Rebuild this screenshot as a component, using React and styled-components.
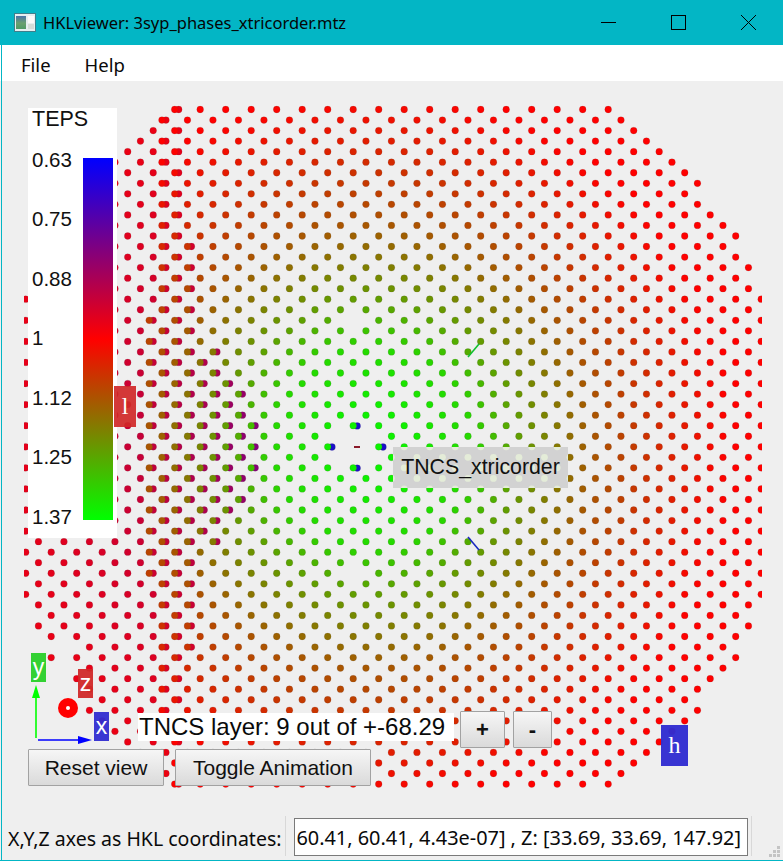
import React from 'react';
import styled, { createGlobalStyle } from 'styled-components';

const GlobalStyle = createGlobalStyle`
  html, body { margin: 0; padding: 0; background: #efefef; }
`

const UI_FONT = `"Noto Sans", "Open Sans", sans-serif`
const CHART_FONT = `"Liberation Sans", Arial, sans-serif`
const TEAL = '#03b6c5'

// lattice of the hkl plane, in page pixels
const CX = 353.2
const CY = 447
const DX = 25.5
const DY = 10.54

const RIGHT_EDGE = [608,620,633,646,659,671,684,697,684,697,710,722,735,722,735,748,735,748,760,748,760,748,760,748,760,
  748,760,748,760,748,760,748,760,748,760,748,760,748,760,748,760,748,760,748,760,748,760,
  748,735,748,735,722,735,722,710,697,684,697,684,671,658,646,633,620,608]

const BACK_LEFT = {32:178,31:165,30:152,29:140,28:127,27:114,26:102,25:89,24:102,23:89,22:76,21:64,20:51,19:64,18:51,17:38,16:51,15:38}
const GAPS = ['32:353','31:340','31:366','33:340','33:366','20:353','44:353']

const ramp = [[0,.04],[40,.06],[100,.15],[140,.35],[180,.5],[225,.67],[280,.82],[340,.97],[360,1]]
function frontT(r){
  for(let i=1;i<ramp.length;i++){
    if(r<=ramp[i][0]){
      const [a,ta]=ramp[i-1], [b,tb]=ramp[i]
      return ta+(tb-ta)*(r-a)/(b-a)
    }
  }
  return 1
}
function frontColor(x,y){
  const t=frontT(Math.hypot(x-372,y-CY))
  return `rgb(${Math.round(255*t)},${Math.round(255*(1-t))},0)`
}
function backColor(x,y){
  const s=.95*Math.exp(-Math.hypot(x-357,y-CY)/150)
  return `rgb(${Math.round(255*(1-s))},0,${Math.round(255*s)})`
}
function backRight(d){
  if(d<=2) return 256
  if(d<=5) return 243
  if(d<=6) return 230
  if(d<=9) return 217
  if(d<=14) return 204
  if(d<=19) return 192
  return 179
}

function buildDots(){
  const front=[], back=[]
  for(let n=0;n<=64;n++){
    const y=109.5+n*DY
    const odd=n%2===1
    const d=Math.abs(n-32)
    const frontLeft=odd?161:(d<=12?149:174)
    const backLeft=BACK_LEFT[d]??(odd?38:25)
    for(let i=-14;i<=17;i++){
      const x=CX+i*DX+(odd?DX/2:0)
      if(x>=frontLeft&&x<=RIGHT_EDGE[n]+3&&!GAPS.includes(`${n}:${Math.round(x)}`)){
        front.push({x,y,c:frontColor(x,y)})
      }
      const bx=x+4
      if(bx>=backLeft&&bx<=backRight(d)){
        back.push({x:bx,y,c:backColor(bx,y)})
      }
    }
  }
  const cy=CY
  const core=[[357.2,cy-2*DY],[357.2,cy+2*DY],[332,cy],[383,cy]]
  core.forEach(([x,y])=>back.push({x,y,c:'#1a10c8'}))
  return {front,back}
}
const {front,back}=buildDots()

const TNCS_BOX={x:393,y:447,w:175,h:41}
const boxDots=front.filter(p=>p.x>TNCS_BOX.x-4&&p.x<TNCS_BOX.x+TNCS_BOX.w+4&&p.y>TNCS_BOX.y-4&&p.y<TNCS_BOX.y+TNCS_BOX.h+4)

const Window = styled.div`
  position:relative;
  width:783px;
  height:861px;
  display:flex;
  flex-direction:column;
  overflow:hidden;
  background:#efefef;
  &::before{
    content:'';
    position:absolute;
    left:1px;
    top:45px;
    bottom:0;
    width:1px;
    background:${TEAL};
    z-index:5;
  }
  &::after{
    content:'';
    position:absolute;
    left:0;
    right:0;
    bottom:0;
    height:1px;
    background:${TEAL};
    z-index:5;
  }
`

const TitleBar = styled.div`
  height:45px;
  flex:none;
  display:flex;
  align-items:center;
  background:${TEAL};
  padding-left:14px;
  font:16.5px ${UI_FONT};
  color:#050505;
`

const TitleText = styled.span`
  margin-left:7px;
  flex:1;
  white-space:nowrap;
`

const WinButton = styled.div`
  width:70px;
  height:45px;
  display:flex;
  align-items:center;
  justify-content:center;
`

const MenuBar = styled.div`
  height:36px;
  box-sizing:border-box;
  padding:3px 0 0 21px;
  flex:none;
  display:flex;
  align-items:center;
  gap:34px;
  background:#fff;
  font:18.5px ${UI_FONT};
  color:#0a0a0a;
`

const Viewer = styled.div`
  position:relative;
  height:731px;
  flex:none;
`

const Lattice = styled.svg`
  display:block;
  width:783px;
  height:731px;
`

const Legend = styled.div`
  position:absolute;
  left:28px;
  top:27px;
  width:85px;
  height:430px;
  padding-left:4px;
  background:#fff;
  font:20.5px ${CHART_FONT};
  color:#111;
`

const LegendTitle = styled.div`
  height:23px;
  line-height:23px;
  font-size:21.5px;
`

const LegendBody = styled.div`
  display:flex;
  margin-top:16.5px;
`

const LegendLabels = styled.div`
  width:51px;
  height:380px;
  display:flex;
  flex-direction:column;
  justify-content:space-between;
  line-height:23px;
`

const ColorBar = styled.div`
  width:30px;
  height:362px;
  margin-top:10.5px;
  background:linear-gradient(to bottom,#0000ff,#ff0000 50%,#00ff00);
`

const AxisTag = styled.div`
  position:absolute;
  left:${p=>p.$x}px;
  top:${p=>p.$y-81}px;
  width:${p=>p.$w}px;
  height:${p=>p.$h}px;
  display:flex;
  align-items:center;
  justify-content:center;
  background:${p=>p.$bg};
  color:#fff;
  font:${p=>p.$serif?`24px "Liberation Serif", serif`:`23px ${CHART_FONT}`};
`

const SheetLabel = styled.div`
  position:absolute;
  left:${TNCS_BOX.x}px;
  top:${TNCS_BOX.y-81}px;
  width:${TNCS_BOX.w}px;
  height:${TNCS_BOX.h}px;
  display:flex;
  align-items:center;
  justify-content:center;
  overflow:hidden;
  background:#d2d2d2;
  font:21.3px ${CHART_FONT};
  color:#111;
`

const SheetDots = styled.svg`
  position:absolute;
  left:0;
  top:0;
  width:100%;
  height:100%;
`

const SheetText = styled.span`
  position:relative;
`

const Gizmo = styled.svg`
  position:absolute;
  left:28px;
  top:${680-81}px;
  width:70px;
  height:65px;
`

const LayerRow = styled.div`
  position:absolute;
  left:138px;
  top:${711-81}px;
  display:flex;
  align-items:center;
`

const LayerText = styled.div`
  width:316px;
  height:28px;
  margin-top:-5px;
  margin-right:6px;
  padding-left:1px;
  box-sizing:border-box;
  background:#fff;
  font:24px/28px ${CHART_FONT};
  color:#0a0a0a;
  white-space:nowrap;
`

const Button = styled.button`
  box-sizing:border-box;
  width:${p=>p.$w}px;
  height:37px;
  margin:0;
  padding:0;
  border:1px solid #a2a2a2;
  border-radius:1px;
  background:linear-gradient(to bottom,#f6f6f6,#dadada);
  color:#111;
  font:${p=>p.$bold?'bold 22px':'21px'} ${CHART_FONT};
  white-space:nowrap;
`

const StepButton = styled(Button)`
  margin-right:8px;
`

const ActionRow = styled.div`
  position:absolute;
  left:28px;
  top:${749-81}px;
  display:flex;
  gap:11px;
`

const StatusBar = styled.div`
  height:48px;
  flex:none;
  display:flex;
  align-items:center;
  padding-left:8px;
  font:19.5px ${UI_FONT};
  color:#0a0a0a;
`

const StatusLabel = styled.div`
  width:277px;
  padding-top:4px;
  white-space:nowrap;
`

const Divider = styled.div`
  width:1px;
  height:40px;
  background:#d8d8d8;
`

const CoordBox = styled.div`
  box-sizing:border-box;
  width:454px;
  height:38px;
  margin:2px 3px 0 8px;
  padding:1px 6px 0 0;
  display:flex;
  justify-content:flex-end;
  align-items:center;
  overflow:hidden;
  border:1px solid #7a7a7a;
  background:#fff;
  font-size:19.9px;
  white-space:nowrap;
`

const Grip = styled.svg`
  position:absolute;
  right:2px;
  bottom:3px;
  width:12px;
  height:12px;
`

function WindowGlyph({kind}){
  return (
    <svg width="17" height="17" viewBox="0 0 17 17" fill="none" stroke="#000" strokeWidth="1">
      {kind==='min'&&<path d="M1 8.5H16"/>}
      {kind==='max'&&<rect x="1.5" y="1.5" width="14" height="14"/>}
      {kind==='close'&&<path d="M1 1L16 16M16 1L1 16"/>}
    </svg>
  )
}

function AppIcon(){
  return (
    <svg width="22" height="19" viewBox="0 0 22 19">
      <defs>
        <linearGradient id="appicon" x1="0" y1="0" x2="0" y2="1">
          <stop offset="0" stopColor="#4a74a8"/>
          <stop offset=".55" stopColor="#6aa070"/>
          <stop offset="1" stopColor="#4f9a66"/>
        </linearGradient>
      </defs>
      <rect x=".5" y=".5" width="21" height="18" fill="#e6eef0" stroke="#3f7f8c"/>
      <rect x="2" y="3" width="10" height="13" fill="url(#appicon)"/>
      <rect x="14" y="3" width="6" height="7" fill="#fafafa"/>
      <rect x="14" y="11" width="6" height="5" fill="#d4dcd8"/>
    </svg>
  )
}

function App(){
  return (
    <Window>
      <GlobalStyle/>
      <TitleBar>
        <AppIcon/>
        <TitleText>HKLviewer: 3syp_phases_xtricorder.mtz</TitleText>
        <WinButton><WindowGlyph kind="min"/></WinButton>
        <WinButton><WindowGlyph kind="max"/></WinButton>
        <WinButton><WindowGlyph kind="close"/></WinButton>
      </TitleBar>
      <MenuBar>
        <span>File</span>
        <span>Help</span>
      </MenuBar>
      <Viewer>
        <Lattice viewBox="0 81 783 731">
          <defs>
            <clipPath id="plot"><rect x="24" y="90" width="738" height="720"/></clipPath>
          </defs>
          <g clipPath="url(#plot)" stroke="rgba(90,70,70,.3)" strokeWidth=".5">
            {back.map((p,i)=><circle key={'b'+i} cx={p.x} cy={p.y} r="3.4" fill={p.c}/>)}
            {front.map((p,i)=><circle key={'f'+i} cx={p.x} cy={p.y} r="3.4" fill={p.c}/>)}
          </g>
          <rect x="354" y="446" width="6" height="2" fill="#8a1a2a"/>
          <path d="M479 344L468 357" stroke="#10c030" strokeWidth="1.6"/>
          <path d="M468 537L479 550" stroke="#1a2ac0" strokeWidth="1.6"/>
        </Lattice>

        <Legend>
          <LegendTitle>TEPS</LegendTitle>
          <LegendBody>
            <LegendLabels>
              {['0.63','0.75','0.88','1','1.12','1.25','1.37'].map(v=><div key={v}>{v}</div>)}
            </LegendLabels>
            <ColorBar/>
          </LegendBody>
        </Legend>

        <AxisTag $x={114} $y={386} $w={22} $h={41} $bg="rgba(208,40,40,.92)" $serif>l</AxisTag>
        <AxisTag $x={661} $y={725} $w={27} $h={41} $bg="rgba(48,44,208,.96)" $serif>h</AxisTag>

        <SheetLabel>
          <SheetDots viewBox={`${TNCS_BOX.x} ${TNCS_BOX.y} ${TNCS_BOX.w} ${TNCS_BOX.h}`}>
            {boxDots.map((p,i)=><circle key={i} cx={p.x} cy={p.y} r="3.4" fill="#e4ecd8"/>)}
          </SheetDots>
          <SheetText>TNCS_xtricorder</SheetText>
        </SheetLabel>

        <Gizmo viewBox="28 680 70 65">
          <path d="M36 698V738" stroke="#00ff00" strokeWidth="1.6"/>
          <path d="M36 685L32 698H40Z" fill="#00ff00"/>
          <path d="M38 740H80" stroke="#0000ff" strokeWidth="1.6"/>
          <path d="M92 740L78 736V744Z" fill="#0000ff"/>
          <circle cx="68" cy="708" r="10" fill="#ff0000"/>
          <circle cx="68" cy="708" r="2" fill="#fff"/>
        </Gizmo>
        <AxisTag $x={31} $y={653} $w={15} $h={29} $bg="#33d133">y</AxisTag>
        <AxisTag $x={78} $y={669} $w={15} $h={29} $bg="rgba(208,40,40,.95)">z</AxisTag>
        <AxisTag $x={94} $y={712} $w={15} $h={29} $bg="rgba(48,44,208,.95)">x</AxisTag>

        <LayerRow>
          <LayerText>TNCS layer: 9 out of +-68.29</LayerText>
          <StepButton $w={45} $bold>+</StepButton>
          <StepButton $w={39} $bold>-</StepButton>
        </LayerRow>
        <ActionRow>
          <Button $w={136}>Reset view</Button>
          <Button $w={196}>Toggle Animation</Button>
        </ActionRow>
      </Viewer>
      <StatusBar>
        <StatusLabel>X,Y,Z axes as HKL coordinates:</StatusLabel>
        <Divider/>
        <CoordBox>60.41, 60.41, 4.43e-07] , Z: [33.69, 33.69, 147.92]</CoordBox>
        <Divider/>
        <Grip viewBox="0 0 12 12" fill="#c4c4c4">
          <rect x="8" y="0" width="3" height="3"/>
          <rect x="4" y="4" width="3" height="3"/>
          <rect x="8" y="4" width="3" height="3"/>
          <rect x="0" y="8" width="3" height="3"/>
          <rect x="4" y="8" width="3" height="3"/>
          <rect x="8" y="8" width="3" height="3"/>
        </Grip>
      </StatusBar>
    </Window>
  )
}

export default App
